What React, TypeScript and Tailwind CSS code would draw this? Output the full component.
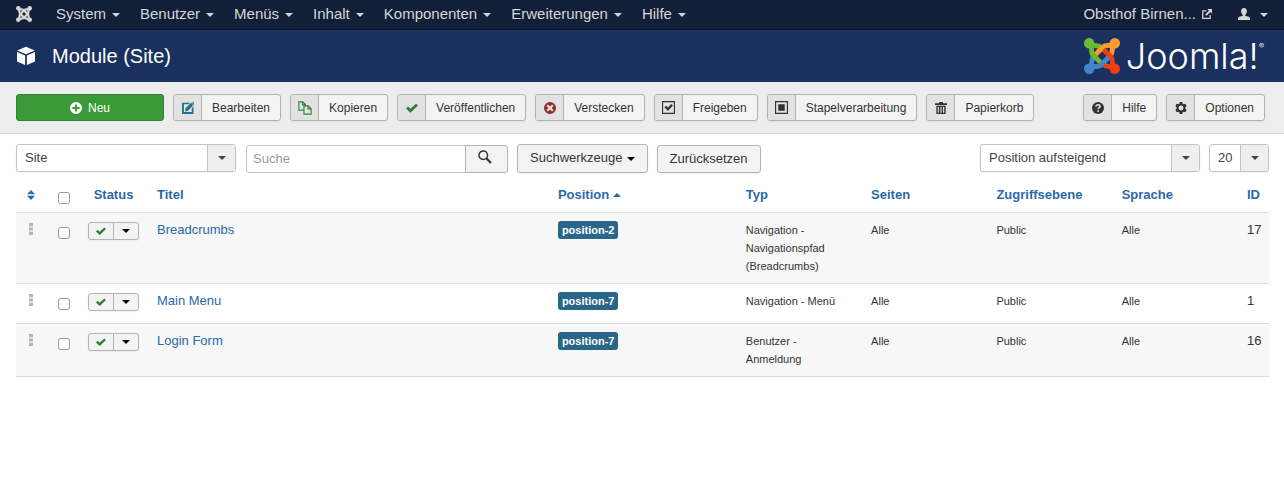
import React from "react";

type IconProps = { className?: string };

const Svg = ({ className = "size-3.5", children }: IconProps & { children: React.ReactNode }) => (
  <svg viewBox="0 0 16 16" className={className} fill="currentColor" aria-hidden="true">
    {children}
  </svg>
);

const PlusCircle = () => (
  <Svg className="size-3">
    <path fillRule="evenodd" d="M8 0a8 8 0 1 0 0 16A8 8 0 0 0 8 0zM6.700 3.200h2.600v3.500h3.500v2.600H9.300v3.500H6.700V9.300H3.200V6.700h3.500z" />
  </Svg>
);
const EditIcon = () => (
  <Svg className="size-3">
    <path d="M0 1h10.500L8.700 3H2.600v10.400h10.400V8l2.400-2v10H0z" />
    <path d="M4.800 8.200 11.800 1l3.300 3.300L8 11.500 4 12.500z" />
    <path d="M12.600.3h2.400L16 1.300v2.200l-.400.400z" />
  </Svg>
);
const CopyIcon = () => (
  <Svg className="size-3.5">
    <g fill="none" stroke="currentColor" strokeWidth="1.300">
      <path d="M6.500 10.500H1V1h4.500L8.500 4v2M5.200 1v3.500h3.300" />
      <path d="M6.800 5.500h5L15 8.700V15H6.800zM11.500 5.500V9H15" />
    </g>
  </Svg>
);
const CheckIcon = ({ className = "size-3" }: IconProps) => (
  <Svg className={className}>
    <path d="M0 8.800 2.700 6.100 5.900 9.100 13.300 2.300 16 4.800 5.900 14.400z" />
  </Svg>
);
const CancelIcon = () => (
  <Svg className="size-3">
    <path fillRule="evenodd" d="M8 0a8 8 0 1 0 0 16A8 8 0 0 0 8 0zM5.300 3.200 8 5.900l2.700-2.700 2.100 2.100L10.100 8l2.700 2.700-2.100 2.100L8 10.100l-2.700 2.700-2.100-2.100L5.900 8 3.200 5.300z" />
  </Svg>
);
const CheckboxIcon = () => (
  <Svg className="size-[13px]">
    <path d="M.7.7h14.600v14.600H.7z" fill="none" stroke="currentColor" strokeWidth="1.400" />
    <path d="M3 7.800 5 5.900l2.300 2.200L11.400 3.600l2 2-6.100 6.700z" />
  </Svg>
);
const PartialIcon = () => (
  <Svg className="size-[13px]">
    <path d="M.7.7h14.600v14.600H.7z" fill="none" stroke="currentColor" strokeWidth="1.400" />
    <path d="M4 4h8v8H4z" />
  </Svg>
);
const TrashIcon = () => (
  <Svg className="size-3">
    <path fillRule="evenodd" d="M5.500 0h5v1.700H16v2.300H0V1.700h5.500zM1.800 5h12.400v11H1.800zm1.900 1.500v7.800h1.500V6.500zm3.500 0v7.800h1.600V6.500zm3.500 0v7.800h1.600V6.500z" />
  </Svg>
);
const HelpIcon = () => (
  <Svg className="size-3">
    <circle cx="8" cy="8" r="8" />
    <path d="M5.300 6.200C5.300 4.500 6.500 3.800 8 3.800s2.800.8 2.800 2.200C10.800 7.500 8.100 7.700 8.100 9.800M8.100 11v2.200" fill="none" stroke="#e2e2e2" strokeWidth="2" />
  </Svg>
);
const CogIcon = () => (
  <Svg className="size-3">
    <path fillRule="evenodd" d="M6.300 0h3.400l.5 2.200 1.300.8 2.200-.8 1.800 3L13.900 7v2l1.600 1.800-1.800 3-2.200-.7-1.300.8L9.700 16H6.300l-.5-2.100-1.300-.8-2.200.7-1.800-3L2.100 9V7L.5 5.200l1.800-3 2.200.8 1.300-.8zM8 4.700a3.300 3.300 0 1 0 0 6.600 3.300 3.300 0 0 0 0-6.600z" />
  </Svg>
);
const SearchIcon = () => (
  <Svg className="size-3.5">
    <circle cx="6" cy="6" r="4.900" fill="none" stroke="currentColor" strokeWidth="1.700" />
    <path d="m9.500 9.500 5.300 5.300" stroke="currentColor" strokeWidth="2.500" />
  </Svg>
);
const ExternalIcon = () => (
  <Svg className="size-2.5">
    <path d="M7 3H1.200v11.800H13V9.500" fill="none" stroke="currentColor" strokeWidth="2" />
    <path d="M8.500 0H16v7.500l-2.600-2.600-6 6-2.300-2.300 6-6z" />
  </Svg>
);
const UserIcon = () => (
  <Svg className="size-3">
    <path d="M8 0c2.500 0 3.900 1.700 3.900 4.300 0 2-.9 3.900-2.200 4.900v1.300c3.300.3 6.300 1.300 6.300 3.300V16H0v-2.200c0-2 3-3 6.300-3.300V9.200C5 8.200 4.100 6.300 4.100 4.300 4.100 1.700 5.500 0 8 0z" />
  </Svg>
);
const CubeIcon = () => (
  <Svg className="size-5">
    <path d="M8 .6 15 3.500 8 6.500 1 3.500zM.8 4.700l6.500 2.900v7.600L.8 12.300zM15.200 4.700 8.700 7.600v7.600l6.500-2.900z" />
  </Svg>
);
const SortIcon = () => (
  <Svg className="size-2.5">
    <path d="M8 0l6.500 6.800h-13zM8 16l6.500-6.800h-13z" />
  </Svg>
);
const HandleIcon = () => (
  <svg viewBox="0 0 4 12" className="h-3 w-1" fill="#b5b5b5" aria-hidden="true">
    <path d="M0 0h4v3.200H0zM0 4.400h4v3.200H0zM0 8.800h4V12H0z" />
  </svg>
);

const Caret = ({ className = "" }: IconProps) => (
  <svg viewBox="0 0 8 4" className={`h-1 w-2 shrink-0 ${className}`} fill="currentColor" aria-hidden="true">
    <path d="M0 0h8L4 4z" />
  </svg>
);

/* The mark is one hooked arm repeated at quarter turns. */
const JoomlaMark = ({ className, colors }: { className: string; colors: string[] }) => (
  <svg viewBox="0 0 36 36" className={className} fill="none" aria-hidden="true">
    {colors.map((color, i) => (
      <g key={i} transform={`rotate(${i * 90} 18 18)`} stroke={color} strokeWidth="5">
        <path d="M5 5C10 9.500 13 6.500 16.500 9L20 12.500" />
        <circle cx="5.200" cy="5.200" r="5.200" fill={color} stroke="none" />
      </g>
    ))}
    {colors.map((color, i) => (
      <g key={i} transform={`rotate(${i * 90} 18 18)`} stroke={color} strokeWidth="5">
        <path d="M5 5C10 9.500 5.500 13.500 9 17L16.500 24.500" />
      </g>
    ))}
    <path d="M9 17L12.500 20.500" stroke={colors[0]} strokeWidth="5" />
  </svg>
);

const menu = ["System", "Benutzer", "Menüs", "Inhalt", "Komponenten", "Erweiterungen", "Hilfe"];

const actions = [
  { label: "Bearbeiten", icon: <EditIcon />, tint: "text-[#24748c]" },
  { label: "Kopieren", icon: <CopyIcon />, tint: "text-[#378137]" },
  { label: "Veröffentlichen", icon: <CheckIcon />, tint: "text-[#2f7d32]" },
  { label: "Verstecken", icon: <CancelIcon />, tint: "text-[#942a25]" },
  { label: "Freigeben", icon: <CheckboxIcon />, tint: "text-[#333]" },
  { label: "Stapelverarbeitung", icon: <PartialIcon />, tint: "text-[#333]" },
  { label: "Papierkorb", icon: <TrashIcon />, tint: "text-[#333]" },
];
const extras = [
  { label: "Hilfe", icon: <HelpIcon />, tint: "text-[#333]" },
  { label: "Optionen", icon: <CogIcon />, tint: "text-[#333]" },
];

const rows = [
  { title: "Breadcrumbs", position: "position-2", type: "Navigation - Navigationspfad (Breadcrumbs)", id: 17 },
  { title: "Main Menu", position: "position-7", type: "Navigation - Menü", id: 1 },
  { title: "Login Form", position: "position-7", type: "Benutzer - Anmeldung", id: 16 },
];

function ToolButton({ label, icon, tint }: { label: string; icon: React.ReactNode; tint: string }) {
  return (
    <button type="button" className="flex h-[27px] items-stretch overflow-hidden rounded-[3px] border border-[#b3b3b3] bg-[#f3f3f3] text-xs text-[#333] shadow-xs">
      <span className={`flex w-7 items-center justify-center border-r border-[#b3b3b3] bg-[#e2e2e2] ${tint}`}>{icon}</span>
      <span className="self-center px-2.5">{label}</span>
    </button>
  );
}

function Picker({ label, value, className }: { label: string; value: string; className: string }) {
  return (
    <div className={`relative h-7 ${className}`}>
      <select aria-label={label} defaultValue={value} className="h-full w-full appearance-none rounded-[3px] border border-[#c4c4c4] bg-white pr-7 pl-2 text-[13px] text-[#444] shadow-xs">
        <option>{value}</option>
      </select>
      <span className="pointer-events-none absolute inset-y-px right-px flex w-7 items-center justify-center rounded-r-[2px] border-l border-[#c4c4c4] bg-[#efefef] text-[#444]">
        <Caret />
      </span>
    </div>
  );
}

const Tick = ({ label }: { label: string }) => (
  <input type="checkbox" aria-label={label} className="mt-1.5 block size-3 appearance-none rounded-[3px] border border-[#999] bg-white checked:bg-[#3071a9]" />
);

const ColumnLink = ({ children }: { children: React.ReactNode }) => (
  <a href="#" className="inline-flex items-center gap-1 text-[#2a69a8]">
    {children}
  </a>
);

export default function App() {
  const th = "border-b border-[#ddd] p-2 text-left font-bold";
  const td = "border-b border-[#ddd] p-2";
  return (
    <div className="min-h-screen bg-white font-['Liberation_Sans',Arial,sans-serif] text-[13px] leading-[18px] text-[#333]">
      <nav className="flex h-[30px] items-center border-b border-[#0c182b] bg-[#112038] px-4 pb-0.5 text-[15px] text-[#d6d6d6]">
        <a href="#" aria-label="Joomla" className="mr-6">
          <JoomlaMark className="size-4" colors={["#d6d6d6", "#d6d6d6", "#d6d6d6", "#d6d6d6"]} />
        </a>
        <div className="flex gap-5">
          {menu.map((item) => (
            <a key={item} href="#" className="flex items-center gap-1.5">
              {item}
              <Caret className="mt-0.5" />
            </a>
          ))}
        </div>
        <a href="#" className="ml-auto flex items-center gap-1.5">
          Obsthof Birnen...
          <ExternalIcon />
        </a>
        <a href="#" aria-label="Benutzermenü" className="ml-[26px] flex items-center gap-2.5">
          <UserIcon />
          <Caret className="mt-0.5" />
        </a>
      </nav>

      <header className="flex h-[52px] items-center bg-[#1a315f] px-4 text-white">
        <CubeIcon />
        <h1 className="ml-4 text-[20px] leading-6 font-normal">Module (Site)</h1>
        <div className="ml-auto flex items-center gap-1.5 pr-1">
          <JoomlaMark className="size-9" colors={["#6cb933", "#f99a30", "#f23c13", "#4385cb"]} />
          <div className="flex items-start font-['Inter',sans-serif] text-[36px] leading-9 font-light">
            Joomla!
            <span className="text-[8px] leading-4">®</span>
          </div>
        </div>
      </header>

      <div className="flex flex-wrap items-center gap-[9px] border-b border-[#d9d9d9] bg-[#ededed] py-3 pr-[19px] pl-4">
        <button type="button" className="flex h-[27px] w-[148px] items-center justify-center gap-1.5 rounded-[3px] border border-[#328332] bg-[#3a9a38] text-xs text-white">
          <PlusCircle />
          Neu
        </button>
        {actions.map((a) => (
          <ToolButton key={a.label} {...a} />
        ))}
        <div className="ml-auto flex gap-[9px]">
          {extras.map((a) => (
            <ToolButton key={a.label} {...a} />
          ))}
        </div>
      </div>

      <main className="pt-2.5 pr-[15px] pl-4">
        <form className="flex flex-wrap items-start gap-[9px]" onSubmit={(e) => e.preventDefault()}>
          <Picker label="Bereich" value="Site" className="w-[220px]" />
          <div className="mt-px ml-px flex h-7">
            <input type="text" aria-label="Suche" placeholder="Suche" className="w-[220px] rounded-l-[3px] border border-[#c4c4c4] bg-white px-1.5 text-[13px] placeholder:text-[#999]" />
            <button type="submit" aria-label="Suchen" className="-ml-px flex w-[43px] items-center justify-center rounded-r-[3px] border border-[#b3b3b3] bg-[#f3f3f3] pr-1 pb-1">
              <SearchIcon />
            </button>
          </div>
          <button type="button" className="flex h-[29px] items-center gap-1 rounded-[3px] border border-[#b3b3b3] bg-[#f3f3f3] px-3 pb-0.5 shadow-xs">
            Suchwerkzeuge
            <Caret className="mt-0.5 text-black" />
          </button>
          <button type="button" className="mt-px h-7 rounded-[3px] border border-[#b3b3b3] bg-[#f3f3f3] px-3 shadow-xs">
            Zurücksetzen
          </button>
          <div className="ml-auto flex gap-[9px]">
            <Picker label="Sortierung" value="Position aufsteigend" className="w-[220px]" />
            <Picker label="Anzahl" value="20" className="w-[60px]" />
          </div>
        </form>

        <table className="mt-[5px] w-full table-fixed border-separate border-spacing-0">
          <thead>
            <tr>
              <th className="w-[30px] border-b border-[#ddd] py-2">
                <a href="#" aria-label="Reihenfolge" className="flex h-[18px] items-center justify-center text-[#2a69a8]">
                  <SortIcon />
                </a>
              </th>
              <th className="w-[34px] border-b border-[#ddd] pt-2 pl-3 align-top">
                <Tick label="Alle auswählen" />
              </th>
              <th className="w-[69px] border-b border-[#ddd] py-2 pr-2.5 pl-2 text-center font-bold">
                <ColumnLink>Status</ColumnLink>
              </th>
              <th className={th}>
                <ColumnLink>Titel</ColumnLink>
              </th>
              <th className={`${th} w-[15%]`}>
                <ColumnLink>
                  Position
                  <Caret className="rotate-180" />
                </ColumnLink>
              </th>
              {["Typ", "Seiten", "Zugriffsebene", "Sprache"].map((name) => (
                <th key={name} className={`${th} w-[10%]`}>
                  <ColumnLink>{name}</ColumnLink>
                </th>
              ))}
              <th className={`${th} w-[30px]`}>
                <ColumnLink>ID</ColumnLink>
              </th>
            </tr>
          </thead>
          <tbody>
            {rows.map((row) => (
              <tr key={row.title} className="align-top odd:bg-[#f7f7f7]">
                <td className="border-b border-[#ddd] py-2">
                  <span className="flex justify-center pt-0.5">
                    <HandleIcon />
                  </span>
                </td>
                <td className="border-b border-[#ddd] pt-2 pl-3">
                  <Tick label={`${row.title} auswählen`} />
                </td>
                <td className={td}>
                  <div className="mt-px mb-1 flex h-[18px] w-[51px] rounded-[3px] border border-[#b3b3b3] bg-[#f3f3f3] shadow-xs">
                    <button type="button" aria-label="Status ändern" className="flex flex-1 items-center justify-center border-r border-[#b3b3b3] text-[#2f7d32]">
                      <CheckIcon className="size-2.5" />
                    </button>
                    <button type="button" aria-label="Aktionen" className="flex flex-1 items-center justify-center text-black">
                      <Caret />
                    </button>
                  </div>
                </td>
                <td className={td}>
                  <a href="#" className="text-[#2a69a8]">
                    {row.title}
                  </a>
                </td>
                <td className={td}>
                  <span className="block w-fit rounded-[3px] bg-[#2a6689] px-1 text-[11px] font-bold text-white">{row.position}</span>
                </td>
                <td className="border-b border-[#ddd] py-2 pr-5 pl-2 text-[11px]">{row.type}</td>
                <td className={`${td} text-[11px]`}>Alle</td>
                <td className={`${td} text-[11px]`}>Public</td>
                <td className={`${td} text-[11px]`}>Alle</td>
                <td className={td}>{row.id}</td>
              </tr>
            ))}
          </tbody>
        </table>
      </main>
    </div>
  );
}
